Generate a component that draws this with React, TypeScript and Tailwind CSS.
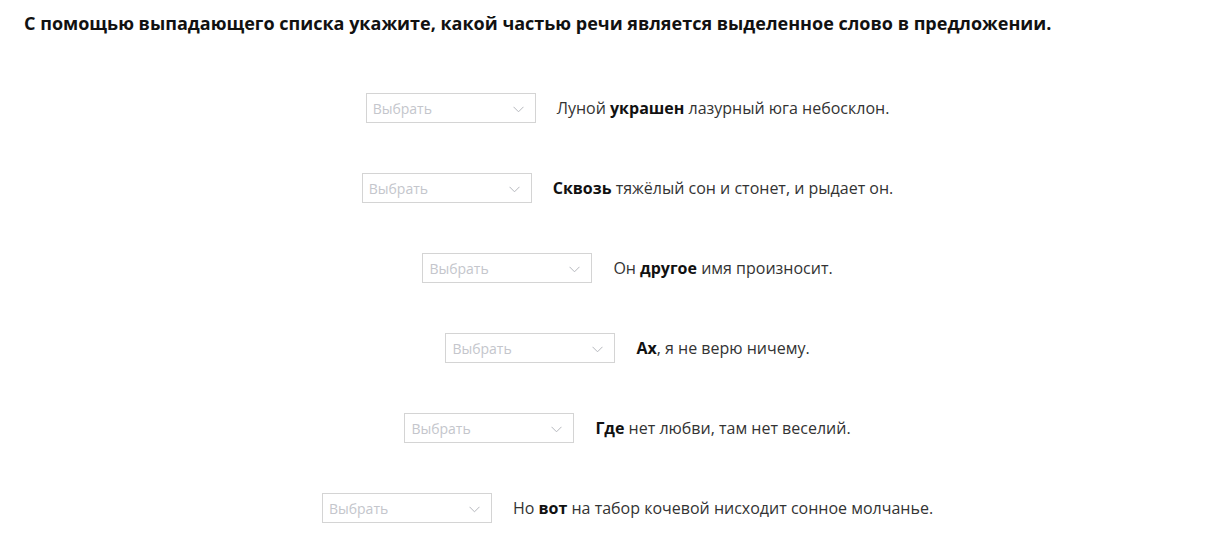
const rows: { before?: string; bold: string; after: string }[] = [
  { before: 'Луной ', bold: 'украшен', after: ' лазурный юга небосклон.' },
  { bold: 'Сквозь', after: ' тяжёлый сон и стонет, и рыдает он.' },
  { before: 'Он ', bold: 'другое', after: ' имя произносит.' },
  { bold: 'Ах', after: ', я не верю ничему.' },
  { bold: 'Где', after: ' нет любви, там нет веселий.' },
  { before: 'Но ', bold: 'вот', after: ' на табор кочевой нисходит сонное молчанье.' },
];

function Select() {
  return (
    <div className="flex h-[30px] w-[170px] shrink-0 items-center justify-between border border-[#d4d4d4] bg-white pl-[6px] pr-[11px]">
      <span className="text-[14px] text-[#c4c6cc]">Выбрать</span>
      <svg width="11" height="7" viewBox="0 0 11 7" fill="none" className="mt-[2px]">
        <path d="M0.5 0.8 L5.5 5.8 L10.5 0.8" stroke="#b5b7bd" strokeWidth="1" />
      </svg>
    </div>
  );
}

export default function App() {
  return (
    <div className="min-h-[555px] bg-white text-[#222]" style={{ fontFamily: '"Open Sans", sans-serif' }}>
      <h1 className="pl-[24px] pt-[10px] text-[18px] font-bold leading-[26px] text-[#111]">
        С помощью выпадающего списка укажите, какой частью речи является выделенное слово в предложении.
      </h1>
      <div className="mt-[57px] flex flex-col gap-[50px] pl-[29px]">
        {rows.map((r, i) => (
          <div key={i} className="flex items-center justify-center gap-[21px]">
            <Select />
            <p className="text-[16px] text-[#333]">
              {r.before}
              <b className="font-bold text-[#111]">{r.bold}</b>
              {r.after}
            </p>
          </div>
        ))}
      </div>
    </div>
  );
}
